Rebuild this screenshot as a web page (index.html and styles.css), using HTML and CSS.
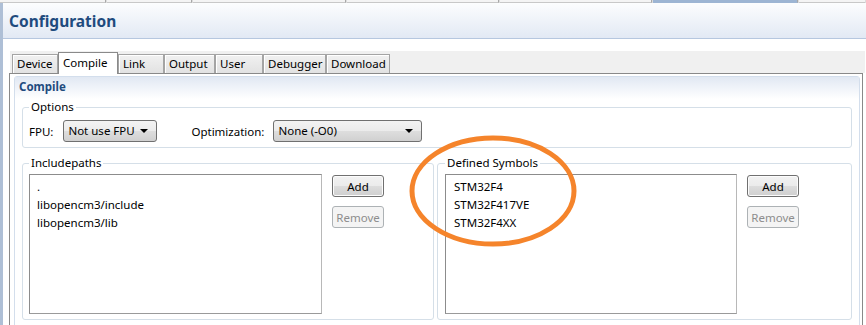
FILE: index.html
```html
<!DOCTYPE html>
<html lang="en">
<head>
  <meta charset="UTF-8" />
  <title>Configuration</title>
  <link rel="stylesheet" href="styles.css">
</head>
<body>

  <div class="topstrip">
    <span class="seg" style="width:105px"></span>
    <span class="seg" style="width:84px"></span>
    <span class="seg" style="width:152px"></span>
    <span class="seg" style="width:151px"></span>
    <span class="seg" style="width:151px"></span>
    <span class="seg seg-active" style="width:144px"></span>
    <span class="seg"></span>
  </div>

  <div class="window">
    <div class="header">
      <h1>Configuration</h1>
    </div>

    <div class="tabs">
      <div class="tab" style="width:46px">Device</div>
      <div class="tab active" style="width:60px">Compile</div>
      <div class="tab" style="width:46px">Link</div>
      <div class="tab" style="width:51px">Output</div>
      <div class="tab" style="width:48px">User</div>
      <div class="tab" style="width:63px">Debugger</div>
      <div class="tab" style="width:64px">Download</div>
    </div>

    <div class="panel">
      <div class="section">
        <div class="section-title">Compile</div>

        <fieldset class="group options">
          <legend>Options</legend>
          <div class="row">
            <span class="label">FPU:</span>
            <div class="combo combo-fpu">Not use FPU <span class="arrow"></span></div>
            <span class="label label-opt">Optimization:</span>
            <div class="combo combo-opt">None (-O0) <span class="arrow"></span></div>
          </div>
        </fieldset>

        <div class="pair">
          <fieldset class="group paths">
            <legend>Includepaths</legend>
            <div class="listrow">
              <ul class="list">
                <li>.</li>
                <li>libopencm3/include</li>
                <li>libopencm3/lib</li>
              </ul>
              <div class="buttons">
                <button class="btn">Add</button>
                <button class="btn" disabled>Remove</button>
              </div>
            </div>
          </fieldset>

          <fieldset class="group symbols">
            <legend>Defined Symbols</legend>
            <div class="listrow">
              <ul class="list">
                <li>STM32F4</li>
                <li>STM32F417VE</li>
                <li>STM32F4XX</li>
              </ul>
              <div class="buttons">
                <button class="btn">Add</button>
                <button class="btn" disabled>Remove</button>
              </div>
            </div>
          </fieldset>
        </div>
      </div>
    </div>
  </div>

  <!-- hand drawn highlight over the symbols list -->
  <svg class="mark" width="176" height="120" viewBox="0 0 176 120">
    <ellipse cx="86" cy="58" rx="81" ry="53" fill="none" stroke="#f5842b" stroke-width="5" />
  </svg>

</body>
</html>
```

FILE: styles.css
```css
body {
  margin: 0;
  background: #fff;
  font-family: "Noto Sans", sans-serif;
  font-size: 11.5px;
  color: #000;
  position: relative;
  height: 325px;
  overflow: hidden;
}

.topstrip {
  display: flex;
  height: 3px;
  background: #dcdcdc;
}

.topstrip .seg {
  height: 2px;
  background: #f4f4f4;
  border-right: 1px solid #a8a8a8;
  border-bottom: 1px solid #c8c8c8;
  margin-right: 1px;
}

.topstrip .seg:last-child {
  flex: 1;
  border-right: none;
}

.topstrip .seg-active {
  background: #9db5d3;
  border-bottom-color: #9db5d3;
}

.window {
  border-left: 3px solid #aebfd6;
  height: 322px;
}

/* title bar */
.header {
  height: 35px;
  background: linear-gradient(#fcfdfe, #e2e9f4);
  border-bottom: 1px solid #b6c7df;
  display: flex;
  align-items: center;
  padding-left: 6px;
}

.header h1 {
  margin: 0;
  font-size: 15.5px;
  font-weight: bold;
  color: #1f4b7e;
}

/* tabs */
.tabs {
  display: flex;
  align-items: flex-end;
  height: 22px;
  margin: 12px 1px 0 7px;
  padding-left: 2px;
  background: #f0f0f0;
  position: relative;
  z-index: 1;
}

.tab {
  box-sizing: border-box;
  height: 19px;
  padding: 0 0 0 4px;
  line-height: 17px;
  border: 1px solid #a4a4a4;
  border-bottom: none;
  background: linear-gradient(#f1f1f1, #e2e2e2);
  box-shadow: inset 1px 1px 0 #fff;
}

.tab.active {
  height: 22px;
  line-height: 19px;
  margin-bottom: -1px;
  background: #fff;
  border-color: #8a8a8a;
  box-shadow: none;
}

.panel {
  margin: 0 3px 0 6px;
  border: 1px solid #898989;
  border-bottom: none;
  height: 260px;
  padding: 2px 2px 0 4px;
}

/* compile section */
.section {
  border: 1px solid #d3deec;
  border-radius: 3px;
  height: 260px;
}

.section-title {
  height: 22px;
  line-height: 20px;
  padding-left: 4px;
  font-weight: bold;
  color: #1f4b7e;
  background: linear-gradient(#e1e8f3, #fff);
}

.group {
  margin: 0;
  border: 1px solid #d5dfe8;
  border-radius: 3px;
  padding: 0 6px;
}

.group legend {
  padding: 0 2px;
  height: 16px;
  line-height: 16px;
}

.options {
  margin: 0 7px 0 7px;
  padding-top: 5px;
  padding-bottom: 5px;
}

.row {
  display: flex;
  align-items: center;
}

.label-opt {
  margin-left: 34px;
}

.combo {
  box-sizing: border-box;
  height: 22px;
  line-height: 20px;
  padding-left: 4px;
  border: 1px solid #707070;
  border-radius: 3px;
  background: linear-gradient(#f3f3f3 0%, #ebebeb 50%, #dedede 50%, #d0d0d0 100%);
  position: relative;
}

.combo-fpu {
  width: 94px;
  margin-left: 10px;
}

.combo-opt {
  width: 149px;
  margin-left: 9px;
}

.combo .arrow {
  position: absolute;
  right: 8px;
  top: 8px;
  width: 0;
  height: 0;
  border-left: 4px solid transparent;
  border-right: 4px solid transparent;
  border-top: 4px solid #000;
}

.pair {
  display: flex;
  gap: 3px;
  margin: 7px 7px 0 7px;
}

.paths {
  width: 412px;
  box-sizing: border-box;
  padding: 3px 6px 5px 6px;
}

.symbols {
  flex: 1;
  padding: 3px 6px 5px 7px;
}

.listrow {
  display: flex;
  align-items: flex-start;
}

.list {
  margin: 0;
  padding: 3px 0 0 7px;
  list-style: none;
  height: 135px;
  border: 1px solid #8c8c8c;
  border-right-color: #b8b8b8;
  border-bottom-color: #9a9a9a;
  background: #fff;
}

.paths .list {
  width: 284px;
}

.symbols .list {
  width: 282px;
  padding-left: 8px;
}

.list li {
  height: 18px;
  line-height: 18px;
}

.buttons {
  display: flex;
  flex-direction: column;
  gap: 9px;
  margin: 1px 0 0 10px;
}

.btn {
  box-sizing: border-box;
  width: 52px;
  height: 22px;
  padding: 0;
  font-family: inherit;
  font-size: 11.5px;
  color: #000;
  border: 1px solid #707070;
  border-radius: 3px;
  background: linear-gradient(#f2f2f2 0%, #ebebeb 50%, #dddddd 50%, #cfcfcf 100%);
  box-shadow: inset 0 0 0 1px #fcfcfc;
}

.btn:disabled {
  color: #8d8d8d;
  border-color: #adb2b5;
  background: #f4f4f4;
  box-shadow: none;
}

.mark {
  position: absolute;
  left: 407px;
  top: 133px;
}
```
